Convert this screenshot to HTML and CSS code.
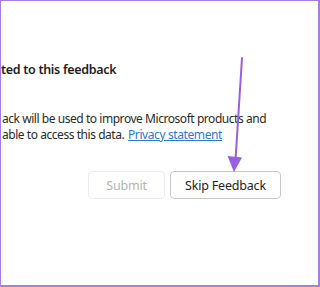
FILE: index.html
```html
<!DOCTYPE html>
<html>
<head>
<meta charset="utf-8">
<link rel="stylesheet" href="styles.css">
</head>
<body>
<div class="frame">
  <h2 class="heading">ted to this feedback</h2>
  <p class="info">ack will be used to improve Microsoft products and<br>able to access this data. <a class="link" href="#">Privacy statement</a></p>
  <div class="actions">
    <button class="btn btn-disabled" disabled>Submit</button>
    <button class="btn">Skip Feedback</button>
  </div>
  <svg class="arrow" width="320" height="287" viewBox="0 0 320 287">
    <line x1="242" y1="58" x2="235.5" y2="160" stroke="#9a5ee0" stroke-width="2" stroke-linecap="round"/>
    <polygon points="227.5,156 242,157.5 234,172" fill="#9a5ee0"/>
  </svg>
</div>
</body>
</html>
```
FILE: styles.css
```css
* { box-sizing: border-box; }
html, body { margin: 0; padding: 0; background: #fff; }
body { width: 320px; height: 287px; overflow: hidden; font-family: "Noto Sans", "Open Sans", sans-serif; color: #242424; }
.frame {
  position: relative;
  width: 320px;
  height: 287px;
  border: 2px solid #a57de6;
  border-top-width: 1px;
  border-left-width: 1px;
  display: flex;
  flex-direction: column;
}
.heading {
  margin: 60px 0 0 0;
  font-size: 12.5px;
  font-weight: 600;
  letter-spacing: -0.3px;
  line-height: 18px;
  color: #1e1e1e;
  white-space: nowrap;
}
.info {
  margin: 32px 0 0 1px;
  font-size: 12px;
  letter-spacing: -0.45px;
  line-height: 16px;
  color: #2a2a2a;
  white-space: nowrap;
}
.link { color: #2a7ad0; text-decoration: underline; margin-left: 1px; letter-spacing: -0.4px; }
.actions {
  display: flex;
  justify-content: flex-end;
  gap: 5px;
  margin-top: 28px;
  padding-right: 37px;
}
.btn {
  height: 28px;
  border: 1px solid #d0d0d0;
  border-radius: 4px;
  background: #fff;
  font-family: "Noto Sans", "Open Sans", sans-serif;
  font-size: 12.5px;
  letter-spacing: -0.2px;
  color: #242424;
  padding: 0;
}
.btn:first-child { width: 77px; }
.btn:last-child { width: 111px; border-color: #c8c8c8; }
.btn-disabled { color: #b3b3b3; border-color: #ececec; }
.arrow { position: absolute; left: -1px; top: -1px; pointer-events: none; }
```
